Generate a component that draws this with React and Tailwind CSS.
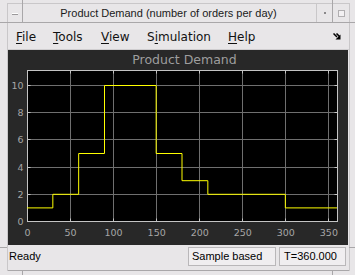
import React from "react";

const X0 = 26, XS = 310 / 360;
const Y0 = 221.5, YS = 13.6;
const px = (t) => X0 + t * XS;
const py = (v) => Y0 - v * YS;

const steps = [
  [0, 30, 1], [30, 60, 2], [60, 90, 5], [90, 150, 10],
  [150, 180, 5], [180, 210, 3], [210, 300, 2], [300, 360, 1],
];

function Chart() {
  const xt = [0, 50, 100, 150, 200, 250, 300, 350];
  const yt = [0, 2, 4, 6, 8, 10];
  let d = "";
  steps.forEach(([a, b, v], i) => {
    const y = py(v);
    if (i === 0) d += `M${px(a)} ${y}`;
    else d += ` V${y}`;
    d += ` H${px(b)}`;
  });
  const L = 26.5, R = 336.5, T = 70.5, B = 221.5;
  return (
    <svg width="341" height="175" viewBox="7 70 341 175" className="block">
      <rect x={L} y={T} width={R - L} height={B - T} fill="#000" />
      {xt.slice(1).map((t) => (
        <line key={"gx" + t} x1={Math.round(px(t)) + 0.5} x2={Math.round(px(t)) + 0.5} y1={T} y2={B} stroke="#6f6f6f" strokeWidth="1" />
      ))}
      {yt.slice(1).map((v) => (
        <line key={"gy" + v} x1={L} x2={R} y1={Math.round(py(v) - 0.5) + 0.5} y2={Math.round(py(v) - 0.5) + 0.5} stroke="#6f6f6f" strokeWidth="1" />
      ))}
      {xt.map((t) => {
        const x = Math.round(px(t)) + 0.5;
        return (
          <g key={"tx" + t}>
            <line x1={x} x2={x} y1={B} y2={B - 3} stroke="#c4c4c4" />
            <line x1={x} x2={x} y1={T} y2={T + 3} stroke="#c4c4c4" />
          </g>
        );
      })}
      {yt.map((v) => {
        const y = Math.round(py(v) - 0.5) + 0.5;
        return (
          <g key={"ty" + v}>
            <line x1={L} x2={L + 3} y1={y} y2={y} stroke="#c4c4c4" />
            <line x1={R} x2={R - 3} y1={y} y2={y} stroke="#c4c4c4" />
          </g>
        );
      })}
      <rect x={L} y={T} width={R - L} height={B - T} fill="none" stroke="#c4c4c4" strokeWidth="1" />
      <path d={d} fill="none" stroke="#ffff00" strokeWidth="1" />
      <g fill="#a6a6a6" fontFamily="'DejaVu Sans', sans-serif" fontSize="9.5">
        {yt.map((v) => (
          <text key={"ly" + v} x={22.5} y={py(v) + 3.5} textAnchor="end">{v}</text>
        ))}
        {xt.map((t) => (
          <text key={"lx" + t} x={px(t) + 0.5} y={236} textAnchor="middle">{t}</text>
        ))}
      </g>
    </svg>
  );
}

function Menu({ pre, u, post }) {
  return (
    <span>
      {pre}
      <span className="underline underline-offset-2">{u}</span>
      {post}
    </span>
  );
}

export default function App() {
  return (
    <div className="relative w-[355px] h-[275px] overflow-hidden bg-[#e8e6e8] font-['DejaVu_Sans',sans-serif]">
      {/* window */}
      <div className="ml-[7px] mt-[3px] w-[343px] h-[268px] border-t border-l border-r border-[#c9c7c9] flex flex-col">
        {/* title bar */}
        <div className="h-[19px] flex items-stretch border-b border-[#a9a7a9]">
          <div className="w-[15px] border-r border-[#a9a7a9] flex items-center justify-center">
            <div className="w-[6px] h-[2px] bg-white border-b border-[#9a989a] mt-[1px]" />
          </div>
          <div className="flex-1 flex items-center justify-center text-[11px] text-[#1a1a1a] font-['Liberation_Sans',sans-serif] pr-[2px]">
            Product Demand (number of orders per day)
          </div>
          <div className="w-[16px] border-l border-[#c9c7c9] flex items-center justify-center">
            <div className="w-[2px] h-[2px] bg-[#8a888a] ml-[1px]" />
          </div>
          <div className="w-[17px] border-l border-[#a9a7a9] flex items-center justify-center">
            <div className="w-[7px] h-[7px] border border-[#b0aeb0] bg-[#f2f0f2]" />
          </div>
        </div>
        {/* menu bar */}
        <div className="h-[27px] flex items-center text-[12px] text-[#111] border-b border-[#cfcdcf]">
          <div className="flex gap-0 pl-[8px] pt-[1px]">
            <span className="w-[37px]"><Menu pre="" u="F" post="ile" /></span>
            <span className="w-[48px]"><Menu pre="" u="T" post="ools" /></span>
            <span className="w-[46px]"><Menu pre="" u="V" post="iew" /></span>
            <span className="w-[81px]"><Menu pre="S" u="i" post="mulation" /></span>
            <span><Menu pre="" u="H" post="elp" /></span>
          </div>
          <div className="flex-1" />
          <svg width="8" height="7" viewBox="0 0 8 7" className="mr-[8px] mt-[1px]">
            <path d="M0.5 0.5 L4 4 M3.5 0.5 L6.5 3.5" stroke="#000" strokeWidth="1.5" fill="none" />
            <path d="M7.5 1.5 V6.5 H2.5 Z" fill="#000" />
          </svg>
        </div>
        {/* figure */}
        <div className="h-[195px] mr-[1px] bg-[#282828] flex flex-col">
          <div className="h-[20px] flex items-center justify-center text-[12.5px] text-[#9e9e9e] pl-[13px]">
            Product Demand
          </div>
          <Chart />
        </div>
        {/* status bar */}
        <div className="flex-1 flex items-center text-[11px] text-black font-['Liberation_Sans',sans-serif] border-b border-[#a9a7a9]">
          <div className="flex-1 pl-[1px] pb-[2px]">Ready</div>
          <div className="w-[88px] h-[19px] border border-[#b9b7b9] bg-[#f0eef0] flex items-center pl-[3px] mb-[2px]">Sample based</div>
          <div className="w-[67px] h-[19px] border border-[#b9b7b9] bg-[#f0eef0] flex items-center pl-[4px] ml-[3px] mr-[3px] mb-[2px]">T=360.000</div>
        </div>
      </div>
      {/* frame grip marks */}
      <div className="absolute left-[22px] top-0 w-px h-[23px] bg-[#a9a7a9]" />
      <div className="absolute left-[332px] top-0 w-px h-[23px] bg-[#a9a7a9]" />
      <div className="absolute left-0 top-[22px] w-[8px] h-px bg-[#a9a7a9]" />
      <div className="absolute left-[349px] top-[22px] w-[6px] h-px bg-[#a9a7a9]" />
      <div className="absolute left-0 top-[247px] w-[7px] h-px bg-[#a9a7a9]" />
      <div className="absolute left-[349px] top-[247px] w-[6px] h-px bg-[#a9a7a9]" />
      <div className="absolute left-[22px] top-[271px] w-px h-[4px] bg-[#a9a7a9]" />
      <div className="absolute left-[332px] top-[271px] w-px h-[4px] bg-[#a9a7a9]" />
    </div>
  );
}
